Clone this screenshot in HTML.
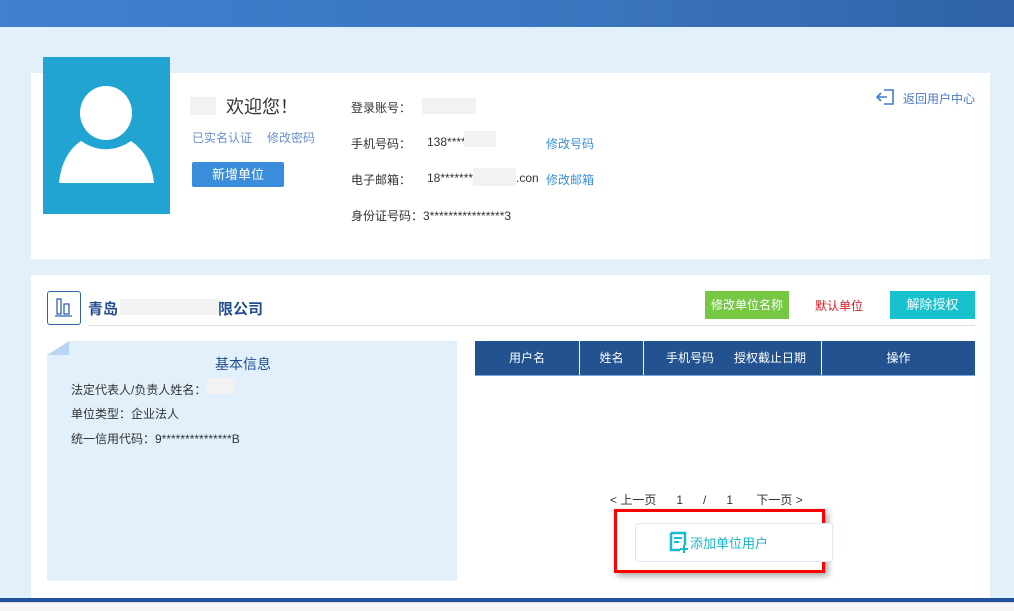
<!DOCTYPE html>
<html><head><meta charset="utf-8"><style>
*{margin:0;padding:0;box-sizing:border-box}
body{width:1014px;height:611px;overflow:hidden;background:#e2f0fb;font-family:"Liberation Sans","Noto Sans CJK SC",sans-serif;font-size:12px;color:#333;position:relative}
.a{position:absolute}
.top{left:0;top:0;width:1014px;height:27px;background:linear-gradient(90deg,#3f80cf,#3a74bd 60%,#2f62a6)}
.card{background:#fff}
.lnk{color:#3b8fd8}
.th{top:341px;height:34px;line-height:34px;color:#fff;text-align:center;font-size:12px;background:#22528f}
</style></head><body>
<div class="a top"></div>
<div class="a card" style="left:31px;top:73px;width:959px;height:186px"></div>
<div class="a" style="left:43px;top:57px;width:127px;height:157px;background:#22a4d2">
<svg width="127" height="157"><ellipse cx="63" cy="56" rx="26" ry="27" fill="#22a4d2" stroke="#22a4d2" stroke-width="6"/><path d="M16 126 C18 106 26 92 38 84 C54 95 72 95 88 84 C100 92 109 106 111 126 Z" fill="#fff"/><ellipse cx="63" cy="56" rx="26" ry="27" fill="#fff"/></svg></div>
<div class="a" style="left:190px;top:97px;width:26px;height:18px;background:#f2f2f2"></div>
<div class="a" style="left:226px;top:93px;font-size:18px;color:#333">欢迎您！</div>
<div class="a lnk" style="left:192px;top:129px;color:#6a8fd0">已实名认证</div>
<div class="a lnk" style="left:267px;top:129px;color:#6a8fd0">修改密码</div>
<div class="a" style="left:192px;top:162px;width:92px;height:25px;background:#3a8ddb;border-radius:2px;color:#fff;font-size:13px;text-align:center;line-height:25px">新增单位</div>
<div class="a" style="left:351px;top:99px">登录账号：</div>
<div class="a" style="left:422px;top:98px;width:54px;height:16px;background:#f2f2f2"></div>
<div class="a" style="left:351px;top:135px">手机号码：</div>
<div class="a" style="left:427px;top:135px">138****</div>
<div class="a" style="left:464px;top:131px;width:32px;height:16px;background:#f2f2f2"></div>
<div class="a lnk" style="left:546px;top:135px">修改号码</div>
<div class="a" style="left:351px;top:171px">电子邮箱：</div>
<div class="a" style="left:427px;top:171px">18*******</div>
<div class="a" style="left:473px;top:168px;width:43px;height:18px;background:#f2f2f2"></div>
<div class="a" style="left:516px;top:171px">.con</div>
<div class="a lnk" style="left:546px;top:171px">修改邮箱</div>
<div class="a" style="left:351px;top:207px">身份证号码：3****************3</div>
<div class="a" style="left:876px;top:88px"><svg width="20" height="18"><path d="M8 2h9v14H8" fill="none" stroke="#3b7fd0" stroke-width="1.6"/><path d="M1 9h10M5 5l-4 4 4 4" fill="none" stroke="#3b7fd0" stroke-width="1.6"/></svg></div>
<div class="a" style="left:903px;top:90px;color:#4a78c4">返回用户中心</div>

<div class="a card" style="left:31px;top:275px;width:959px;height:323px"></div>
<div class="a" style="left:47px;top:291px;width:34px;height:34px;border:1.5px solid #2f62b0;border-radius:3px">
<svg width="31" height="31"><path d="M9 7v15h4V7zM16 12v10h5V12zM7 24h17" fill="none" stroke="#2f62b0" stroke-width="1.3"/></svg></div>
<div class="a" style="left:88px;top:298px;font-size:15px;font-weight:bold;color:#1f4d8f">青岛</div>
<div class="a" style="left:120px;top:299px;width:100px;height:16px;background:#f2f2f2"></div>
<div class="a" style="left:218px;top:298px;font-size:15px;font-weight:bold;color:#1f4d8f">限公司</div>
<div class="a" style="left:88px;top:325px;width:887px;height:1px;background:#ddd"></div>
<div class="a" style="left:705px;top:291px;width:84px;height:28px;background:#76c843;color:#fff;text-align:center;line-height:28px">修改单位名称</div>
<div class="a" style="left:815px;top:297px;color:#e8161e">默认单位</div>
<div class="a" style="left:890px;top:291px;width:85px;height:28px;background:#17c1cd;color:#fff;text-align:center;line-height:28px;font-size:13px">解除授权</div>

<div class="a" style="left:47px;top:341px;width:410px;height:240px;background:#e2f0fb"></div>
<div class="a" style="left:47px;top:341px;width:0;height:0;border-top:14px solid transparent;border-right:22px solid #b8d6f2;"></div>
<div class="a" style="left:47px;top:341px;width:0;height:0;border-top:14px solid #fff;border-right:22px solid transparent"></div>
<div class="a" style="left:215px;top:354px;font-size:14px;color:#1f4d8f">基本信息</div>
<div class="a" style="left:71px;top:381px">法定代表人/负责人姓名：</div>
<div class="a" style="left:207px;top:378px;width:28px;height:16px;background:#f2f2f2"></div>
<div class="a" style="left:71px;top:405px">单位类型：企业法人</div>
<div class="a" style="left:71px;top:430px">统一信用代码：9***************B</div>

<div class="a th" style="left:475px;width:104px">用户名</div>
<div class="a th" style="left:580px;width:63px">姓名</div>
<div class="a th" style="left:644px;width:177px;text-align:left;padding-left:22px">手机号码&nbsp;&nbsp;&nbsp;&nbsp;&nbsp;&nbsp;授权截止日期</div>
<div class="a th" style="left:822px;width:153px">操作</div>
<div class="a" style="left:475px;top:375px;width:500px;height:1px;background:#7fa6dc"></div>
<div class="a" style="left:610px;top:491px;font-size:12px">&lt; 上一页&nbsp;&nbsp;&nbsp;&nbsp;&nbsp;&nbsp;1&nbsp;&nbsp;&nbsp;&nbsp;&nbsp;&nbsp;/&nbsp;&nbsp;&nbsp;&nbsp;&nbsp;&nbsp;1&nbsp;&nbsp;&nbsp;&nbsp;&nbsp;&nbsp;&nbsp;下一页 &gt;</div>
<div class="a" style="left:614px;top:509px;width:211px;height:64px;border:3px solid #f00;box-shadow:3px 3px 6px rgba(0,0,0,.35)"></div>
<div class="a" style="left:635px;top:523px;width:198px;height:39px;border:1px solid #dbe8f6;border-radius:3px;background:#fff"></div>
<div class="a" style="left:669px;top:531px"><svg width="20" height="22"><path d="M2 2h14v12M2 2v17h9" fill="none" stroke="#17bccb" stroke-width="2.5"/><path d="M5 7h8M5 11h5M15 14v8M11 18h8" stroke="#17bccb" stroke-width="2"/></svg></div>
<div class="a" style="left:690px;top:533px;font-size:13px;color:#17b4c8">添加单位用户</div>
<div class="a" style="left:0;top:598px;width:1014px;height:4px;background:#23529a"></div>
<div class="a" style="left:0;top:602px;width:1014px;height:9px;background:#f4f4f4;border-top:1px solid #ddd"></div>
</body></html>
